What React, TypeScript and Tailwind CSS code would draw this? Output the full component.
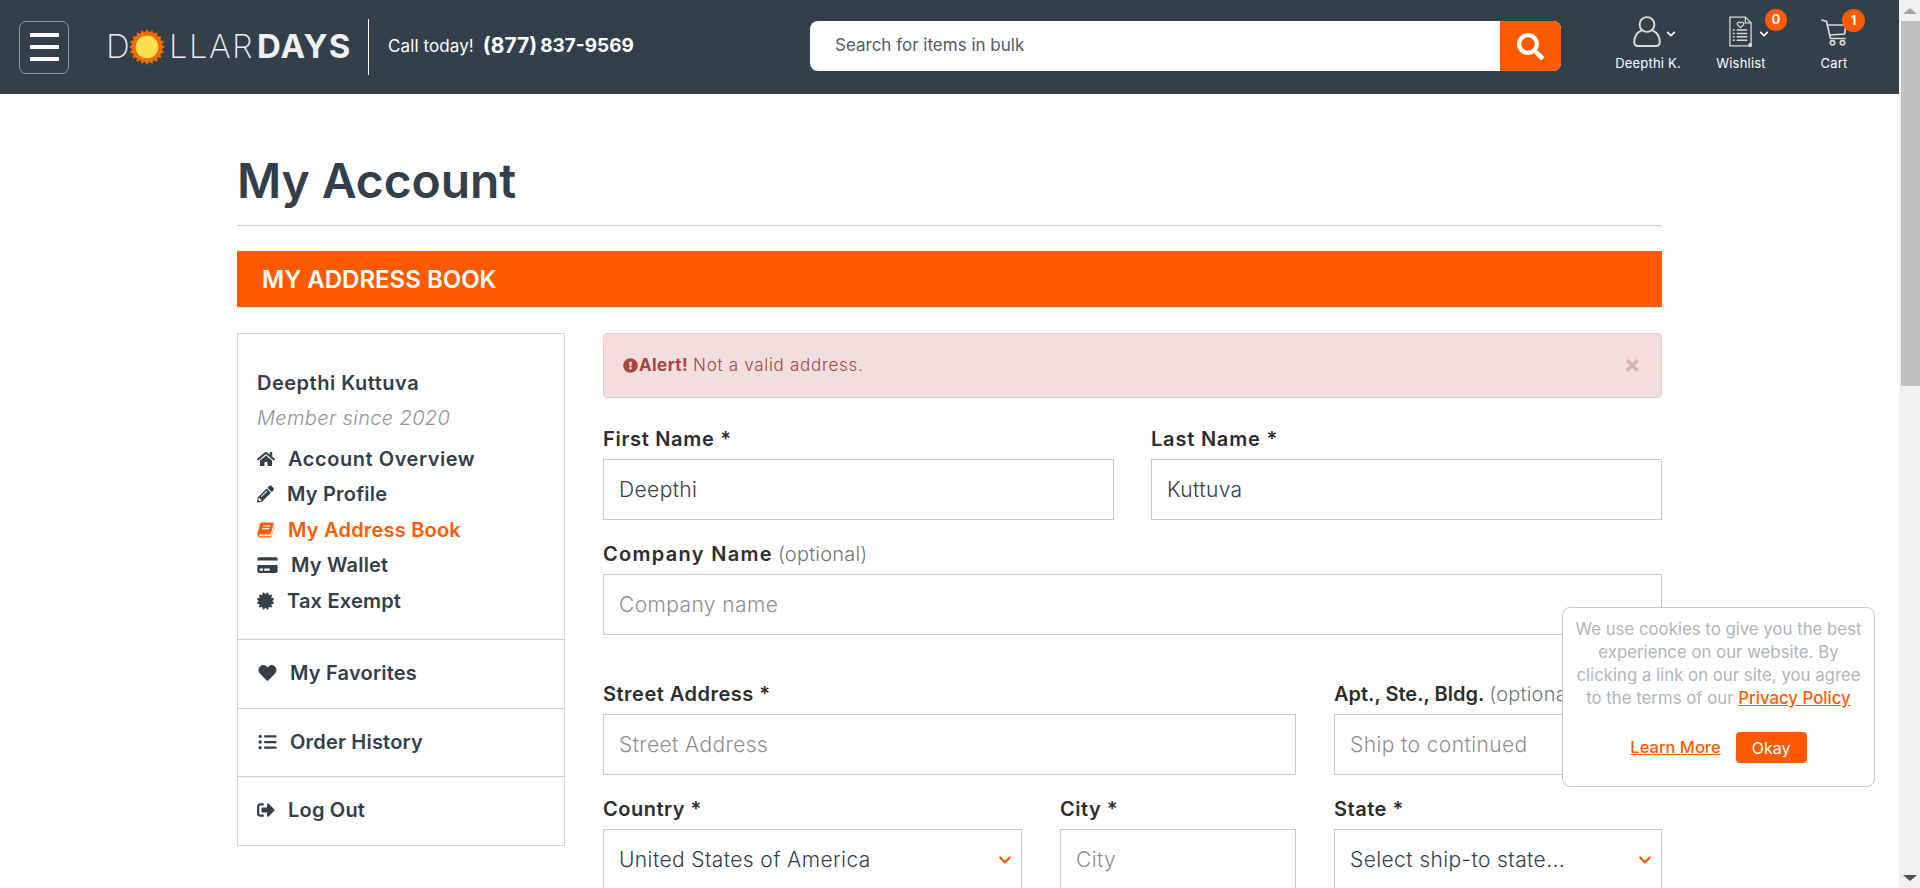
import React from 'react';
import {
  FaCertificate,
  FaChevronDown,
  FaCreditCard,
  FaExclamationCircle,
  FaHeart,
  FaHome,
  FaListUl,
  FaPencilAlt,
  FaSearch,
  FaSignOutAlt,
} from 'react-icons/fa';

const font = "font-['Inter','Liberation_Sans',sans-serif]";

const SunLogo = () => (
  <svg viewBox="0 0 40 40" className="w-[36px] h-[36px] shrink-0">
    <polygon
      fill="#f26a00"
      points="20,0 22.6,4 26,1 27,5.4 31.4,3.6 31.4,8.2 36,8 34.8,12.4 39,13.6 36.4,17.4 40,20 36.4,22.6 39,26.4 34.8,27.6 36,32 31.4,31.8 31.4,36.4 27,34.6 26,39 22.6,36 20,40 17.4,36 14,39 13,34.6 8.6,36.4 8.6,31.8 4,32 5.2,27.6 1,26.4 3.6,22.6 0,20 3.6,17.4 1,13.6 5.2,12.4 4,8 8.6,8.2 8.6,3.6 13,5.4 14,1 17.4,4"
    />
    <circle cx="20" cy="20" r="12.5" fill="#ffdf4f" />
  </svg>
);

const BookIcon = ({ className }: { className: string }) => (
  <svg viewBox="0 0 18 18" className={className}>
    <path
      fill="currentColor"
      fillRule="evenodd"
      d="M5 1 H16.6 C17.5 1 18 1.7 17.7 2.5 L14.6 12.6 C14.3 13.5 13.8 13.8 13 13.8 H3.6 C2.6 13.8 2.3 14.3 2.4 14.8 C2.5 15.3 3 15.7 3.8 15.7 H14 C14.6 15.7 15 15.4 15.2 14.8 L17.9 5.6 C18.1 6 18.1 6.4 18 6.8 L15.6 15.4 C15.3 16.4 14.7 17 13.6 17 H3.6 C2 17 0.8 15.8 0.4 14.4 C0.2 13.7 0.3 13.1 0.5 12.5 L3.2 2.8 C3.5 1.7 4 1 5 1 Z M6.6 4 L6.2 5.2 H13.8 L14.2 4 Z M5.8 7 L5.4 8.2 H13 L13.4 7 Z"
    />
  </svg>
);

const UserIcon = () => (
  <svg viewBox="0 0 28 31" className="w-[28px] h-[31px]" fill="none" stroke="#d9dcde" strokeWidth="1.9">
    <circle cx="14" cy="8.5" r="7.4" />
    <path d="M8.8 14.4 C3.6 16.6 1.2 21 1.2 26 C1.2 28.6 2.6 30 5.2 30 H22.8 C25.4 30 26.8 28.6 26.8 26 C26.8 21 24.4 16.6 19.2 14.4" />
  </svg>
);

const WishlistIcon = () => (
  <svg viewBox="0 0 26 33" className="w-[25px] h-[32px]" fill="none" stroke="#d9dcde" strokeWidth="1.3">
    <path d="M2 1 H18 L24 7 V31 H2 Z" />
    <path d="M18 1 V7 H24" />
    <path d="M13 12 L9.8 8.8 C8.8 7 11 5.4 13 7 C15 5.4 17.2 7 16.2 8.8 Z" />
    <path d="M5 14.5 H7 M9 14.5 H20 M5 18 H7 M9 18 H20 M5 21.5 H7 M9 21.5 H20 M5 25 H7 M9 25 H20" strokeWidth="1.6" />
    <circle cx="23" cy="30" r="2" fill="#d9dcde" stroke="none" />
  </svg>
);

const CartIcon = () => (
  <svg viewBox="0 0 26 28" className="w-[26px] h-[28px]" fill="none" stroke="#d9dcde" strokeWidth="1.7">
    <path d="M1 2 L5.5 3.5 L9.5 20.5 H24" strokeLinecap="round" />
    <path d="M7 7 H25 L23.5 16 L9 17" />
    <circle cx="11.5" cy="24.8" r="2.2" />
    <circle cx="21.5" cy="24.8" r="2.2" />
  </svg>
);

const Badge = ({ value, className }: { value: number; className: string }) => (
  <span
    className={`absolute flex items-center justify-center rounded-full bg-[#ff5a00] text-white text-[13px] font-bold ${className}`}
  >
    {value}
  </span>
);

const Header = () => (
  <header className="h-[94px] bg-[#333f4a] flex items-center shrink-0 text-white">
    <div className="w-[810px] pl-[19px] shrink-0 flex items-center">
      <button className="w-[50px] h-[53px] shrink-0 border border-[#8f979e] rounded-[7px] flex flex-col items-center justify-center gap-[8px]">
        <span className="block w-[29px] h-[4px] bg-white" />
        <span className="block w-[29px] h-[4px] bg-white" />
        <span className="block w-[29px] h-[4px] bg-white" />
      </button>
      <div className="ml-[37px] w-[244px] shrink-0 flex items-center text-[33px] leading-none mb-[1px]">
        <span className="font-extralight text-[#eef0f1] w-[23px]">D</span>
        <SunLogo />
        <span className="font-extralight text-[#eef0f1] ml-[4px] tracking-[1.4px]">LLAR</span>
        <span className="font-bold text-[#eef0f1] ml-[3px] tracking-[1px]">DAYS</span>
      </div>
      <div className="ml-[18px] w-px h-[56px] bg-white shrink-0 mb-[1px]" />
      <span className="ml-[19px] text-[17px] tracking-[0.1px] mb-[1px] whitespace-nowrap">Call today!</span>
      <span className="ml-[9px] font-bold whitespace-nowrap mb-[2px] flex items-center">
        <span className="text-[21px]">(877)</span>
        <span className="text-[19px] ml-[3px]">837-9569</span>
      </span>
    </div>
    <div className="w-[751px] h-[50px] shrink-0 flex rounded-[8px] overflow-hidden bg-white mb-[2px]">
      <div className="flex-1 flex items-center pl-[25px] text-[17px] text-[#555c63]">Search for items in bulk</div>
      <div className="w-[61px] bg-[#ff5a00] flex items-center justify-center">
        <FaSearch className="text-[27px] text-white" />
      </div>
    </div>
    <div className="ml-[53px] w-[68px] self-start mt-[14px] flex flex-col items-center relative">
      <div className="h-[40px] pt-[2px] pr-[2px]">
        <UserIcon />
        <FaChevronDown className="absolute left-[52px] top-[15px] text-[10px] text-white" />
      </div>
      <span className="text-[13px] leading-[18px] tracking-[0.2px] whitespace-nowrap">Deepthi K.</span>
    </div>
    <div className="ml-[33px] w-[52px] self-start mt-[14px] flex flex-col items-center relative">
      <div className="h-[40px] pt-[2px] pr-[2px]">
        <WishlistIcon />
        <FaChevronDown className="absolute left-[44px] top-[15px] text-[10px] text-white" />
        <Badge value={0} className="left-[50px] top-[-5px] w-[22px] h-[22px]" />
      </div>
      <span className="text-[13px] leading-[18px] tracking-[0.2px]">Wishlist</span>
    </div>
    <div className="ml-[52px] w-[30px] self-start mt-[14px] flex flex-col items-center relative">
      <div className="h-[40px] pt-[4px]">
        <CartIcon />
        <Badge value={1} className="left-[23px] top-[-5px] w-[23px] h-[23px]" />
      </div>
      <span className="text-[13px] leading-[18px] tracking-[0.2px]">Cart</span>
    </div>
  </header>
);

const navItems = [
  { label: 'Account Overview', Icon: FaHome, gap: 'ml-[13px] tracking-[0.55px]', size: 'w-[18px]' },
  { label: 'My Profile', Icon: FaPencilAlt, gap: 'ml-[13px]', size: 'w-[17px]' },
  { label: 'My Address Book', Icon: BookIcon, gap: 'ml-[14px]', size: 'w-[17px]', active: true },
  { label: 'My Wallet', Icon: FaCreditCard, gap: 'ml-[13px]', size: 'w-[21px]' },
  { label: 'Tax Exempt', Icon: FaCertificate, gap: 'ml-[13px]', size: 'w-[17px]' },
];

const bottomItems = [
  { label: 'My Favorites', Icon: FaHeart, gap: 'ml-[12px]', size: 'w-[21px]' },
  { label: 'Order History', Icon: FaListUl, gap: 'ml-[12px]', size: 'w-[21px]' },
  { label: 'Log Out', Icon: FaSignOutAlt, gap: 'ml-[13px]', size: 'w-[18px]' },
];

const Sidebar = () => (
  <aside className="w-[328px] h-[513px] shrink-0 border border-[#d4d4d4] text-[#333f4a] flex flex-col">
    <div className="h-[306px] pl-[19px] pt-[35px] border-b border-[#d0d0d0]">
      <div className="text-[20px] leading-[28px] font-semibold tracking-[0.5px] whitespace-nowrap">Deepthi Kuttuva</div>
      <div className="text-[20px] leading-[28px] mt-[7px] italic font-light text-[#8d959c] tracking-[0.35px] whitespace-nowrap">
        Member since 2020
      </div>
      <ul className="mt-[9px]">
        {navItems.map(({ label, Icon, gap, size, active }) => (
          <li
            key={label}
            className={`h-[35.5px] flex items-center text-[20px] font-semibold tracking-[0.2px] whitespace-nowrap ${active ? 'text-[#ff5a00]' : ''}`}
          >
            <Icon className={`${size} h-[18px]`} />
            <span className={gap}>{label}</span>
          </li>
        ))}
      </ul>
    </div>
    {bottomItems.map(({ label, Icon, gap, size }, i) => (
      <div
        key={label}
        className={`flex-1 flex items-center pl-[19px] pb-[2px] text-[20px] font-semibold tracking-[0.2px] ${i < 2 ? 'border-b border-[#d0d0d0]' : ''}`}
      >
        <Icon className={`${size} h-[18px]`} />
        <span className={gap}>{label}</span>
      </div>
    ))}
  </aside>
);

const Field = ({
  label,
  optional,
  value,
  placeholder,
  select,
  className,
  labelTracking = 'tracking-[0.5px]',
}: {
  label: string;
  optional?: boolean;
  value?: string;
  placeholder?: string;
  select?: boolean;
  className: string;
  labelTracking?: string;
}) => (
  <div className={`${className} shrink-0`}>
    <div className="h-[35px] pt-[1px] text-[20px] leading-[28px] font-semibold text-[#2d2d2d] whitespace-nowrap">
      <span className={labelTracking}>{label}</span>
      {optional && <span className="font-light text-[#70777d] ml-[5px] tracking-[0.2px]">(optional)</span>}
    </div>
    <div className="h-[61px] border border-[#c8c8c8] flex items-center justify-between pl-[15px] pr-[9px] text-[21px] tracking-[0.4px] whitespace-nowrap">
      <span className={value ? 'text-[#333f4a] font-light' : 'text-[#8f8f8f] font-light'}>{value ?? placeholder}</span>
      {select && <FaChevronDown className="text-[14px] text-[#ff5a00]" />}
    </div>
  </div>
);

const AddressForm = () => (
  <div className="w-[1059px] flex flex-col">
    <div className="h-[65px] flex items-center justify-between pl-[19px] pr-[20px] bg-[#f2dede] border border-[#ebccd1] rounded-[4px] text-[#a94442] text-[17px] tracking-[0.4px]">
      <div className="flex items-center">
        <FaExclamationCircle className="text-[15px] mr-[1px]" />
        <span className="font-bold">Alert!</span>
        <span className="ml-[5px] font-light tracking-[0.7px]">Not a valid address.</span>
      </div>
      <span className="text-[#d8b1b3] text-[25px] font-bold leading-none mb-[2px]">×</span>
    </div>
    <div className="flex justify-between mt-[26px]">
      <Field label="First Name *" value="Deepthi" className="w-[511px]" labelTracking="tracking-[0.7px]" />
      <Field label="Last Name *" value="Kuttuva" className="w-[511px]" labelTracking="tracking-[0.8px]" />
    </div>
    <Field
      label="Company Name"
      optional
      placeholder="Company name"
      className="w-full mt-[19px]"
      labelTracking="tracking-[1.3px]"
    />
    <div className="flex justify-between mt-[44px]">
      <Field label="Street Address *" placeholder="Street Address" className="w-[693px]" />
      <Field
        label="Apt., Ste., Bldg."
        optional
        placeholder="Ship to continued"
        className="w-[328px]"
        labelTracking="tracking-[0px]"
      />
    </div>
    <div className="flex justify-between mt-[19px]">
      <Field label="Country *" value="United States of America" select className="w-[419px]" />
      <Field label="City *" placeholder="City" className="w-[236px]" />
      <Field label="State *" value="Select ship-to state..." select className="w-[328px]" />
    </div>
  </div>
);

const CookiePopup = () => (
  <div className="absolute left-[1562px] top-[607px] w-[313px] h-[180px] bg-white border border-[#c8c8c8] rounded-[8px] pt-[10px] text-center text-[16.8px]">
    <p className="leading-[23px] text-[#b0b5b9] whitespace-nowrap">
      We use cookies to give you the best
      <br />
      experience on our website. By
      <br />
      clicking a link on our site, you agree
      <br />
      to the terms of our <a className="text-[#ff5a00] underline font-medium">Privacy Policy</a>
    </p>
    <div className="flex items-center justify-center gap-[15px] mt-[22px]">
      <a className="text-[#ff5a00] underline font-medium text-[16.5px]">Learn More</a>
      <button className="w-[71px] h-[31px] rounded-[4px] bg-[#ff5a00] text-white text-[16px]">Okay</button>
    </div>
  </div>
);

const Scrollbar = () => (
  <div className="w-[21px] shrink-0 bg-[#f1f1f1] flex flex-col items-center relative">
    <div className="h-[21px] flex items-center justify-center">
      <div className="w-0 h-0 border-x-[7px] border-x-transparent border-b-[6px] border-b-[#a3a3a3]" />
    </div>
    <div className="w-[19px] ml-[2px] h-[365px] bg-[#c1c1c1]" />
    <div className="absolute bottom-[7px] w-0 h-0 border-x-[7px] border-x-transparent border-t-[6px] border-t-[#505050]" />
  </div>
);

export default function App() {
  return (
    <div className={`${font} relative flex h-[888px] overflow-hidden bg-white`}>
      <div className="flex-1 min-w-0 flex flex-col">
        <Header />
        <main className="pl-[237px] w-[1662px]">
          <h1 className="mt-[30px] h-[102px] pt-[22px] border-b border-[#cfcfcf] text-[48px] leading-[70px] font-semibold text-[#333f4a] tracking-[-0.1px]">
            My Account
          </h1>
          <div className="mt-[25px] h-[56px] bg-[#ff5a00] flex items-center pl-[25px] pt-[1px] text-white text-[24px] font-semibold">
            MY ADDRESS BOOK
          </div>
          <div className="mt-[26px] flex gap-[38px]">
            <Sidebar />
            <AddressForm />
          </div>
        </main>
      </div>
      <Scrollbar />
      <CookiePopup />
    </div>
  );
}
